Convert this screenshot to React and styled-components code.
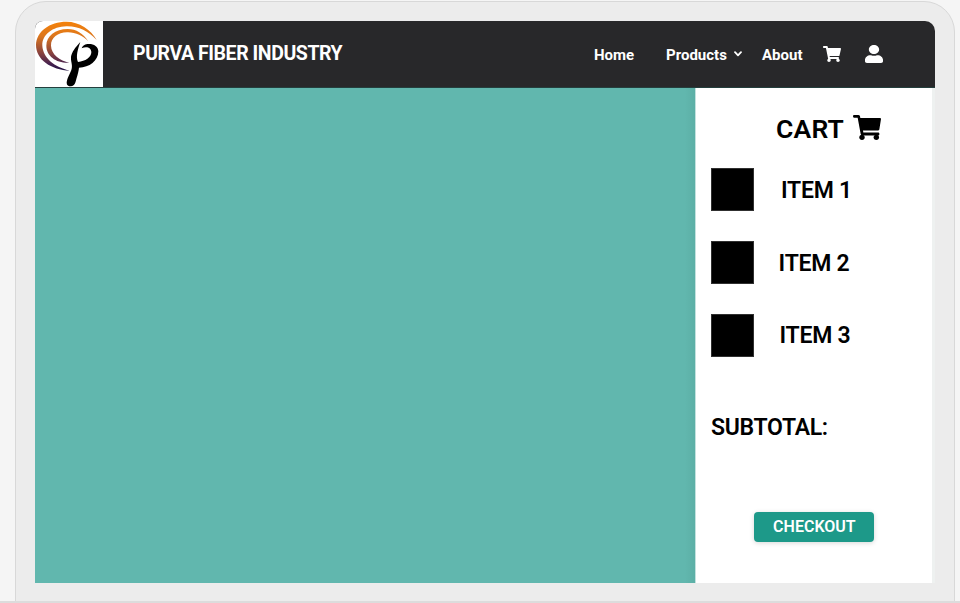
import React from "react";
import styled, { createGlobalStyle } from "styled-components";
import { FaShoppingCart, FaUser } from "react-icons/fa";

const GlobalStyle = createGlobalStyle`
  * { box-sizing: border-box; }
  body {
    margin: 0;
    height: 603px;
    overflow: hidden;
    background: #f5f5f5;
    font-family: Roboto, "Liberation Sans", sans-serif;
  }
`;

const Page = styled.div`
  height: 603px;
  overflow: hidden;
  padding: 1px 5px 0 15px;
  border-bottom: 2px solid #dcdcdc;
`;

const Device = styled.div`
  height: 640px;
  padding: 19px;
  border: 1px solid #d8d8d8;
  border-radius: 31px 31px 0 0;
  background: #ececec;
`;

const Screen = styled.div`
  width: 900px;
  height: 562px;
  display: flex;
  flex-direction: column;
  overflow: hidden;
  border-radius: 8px 10px 0 0;
`;

const Header = styled.header`
  height: 67px;
  flex: none;
  display: flex;
  align-items: flex-start;
  background: #28282a;
  border-bottom: 1px solid #243f3d;
`;

const Logo = styled.svg`
  width: 68px;
  height: 66px;
  flex: none;
  background: #fff;
`;

const Brand = styled.h1`
  width: 461px;
  margin: 20px 0 0 30px;
  font-size: 19.5px;
  line-height: 25px;
  font-weight: 700;
  letter-spacing: -0.44px;
  color: #fff;
  white-space: nowrap;
`;

const Nav = styled.nav`
  display: flex;
  align-items: flex-start;
  color: #fff;
`;

const NavItem = styled.span`
  width: ${(p) => p.$width}px;
  display: flex;
  align-items: center;
  margin-top: 24px;
  font-size: 15px;
  line-height: 20px;
  font-weight: 700;
  white-space: nowrap;
`;

const Chevron = styled.svg`
  width: 8px;
  height: 6px;
  margin: -2px 0 0 7.5px;
  fill: none;
  stroke: #fff;
  stroke-width: 1.8;
  stroke-linecap: round;
  stroke-linejoin: round;
`;

const NavIcon = styled.span`
  width: ${(p) => p.$slot}px;
  margin-top: ${(p) => p.$top}px;
  line-height: 0;
  svg {
    width: ${(p) => p.$width}px;
    height: ${(p) => p.$height}px;
  }
`;

const Content = styled.div`
  flex: 1;
  display: flex;
`;

const Canvas = styled.main`
  width: 660px;
  background: linear-gradient(to right, #61b7ae 650px, #5cafa6);
`;

const CartPanel = styled.aside`
  width: 240px;
  padding: 0 0 0 15px;
  border-left: 1px solid #c3e2df;
  border-right: 3px solid #eef1f0;
  background: #fff;
  color: #000;
`;

const CartHeading = styled.h2`
  height: 80px;
  margin: 0 0 0 65px;
  padding-top: 25px;
  display: flex;
  align-items: flex-start;
  font-size: 26.5px;
  line-height: 32px;
  font-weight: 600;
`;

const CartLabel = styled.span`
  width: 77px;
  letter-spacing: 0.2px;
`;

const CartIcon = styled.svg`
  width: 28px;
  height: 25px;
  margin-top: 2px;
`;

const ItemRow = styled.div`
  height: 73px;
  display: flex;
  align-items: flex-start;
`;

const Thumb = styled.div`
  width: 43px;
  height: 43px;
  margin-left: ${(p) => p.$inset}px;
  background: #000;
  border: 1px solid #303030;
`;

const ItemName = styled.span`
  margin: ${(p) => p.$top}px 0 0 ${(p) => p.$gap}px;
  font-size: 23px;
  line-height: 28px;
  font-weight: 600;
  letter-spacing: -0.25px;
`;

const Subtotal = styled.div`
  height: 98px;
  margin-top: 27px;
  font-size: 23px;
  line-height: 28px;
  font-weight: 600;
  letter-spacing: -0.3px;
`;

const Checkout = styled.button`
  display: block;
  width: 120px;
  height: 30px;
  margin: 0 0 0 43.4px;
  padding: 0 0 1px;
  border: 0;
  border-radius: 4px;
  background: #1d9989;
  box-shadow: 0 1px 5px rgba(0, 0, 0, 0.16);
  color: #fff;
  font: 600 16px/29px Roboto, "Liberation Sans", sans-serif;
`;

const items = [
  { name: "ITEM 1", inset: -0.4, top: 9, gap: 27.4 },
  { name: "ITEM 2", inset: 0, top: 9, gap: 24.6 },
  { name: "ITEM 3", inset: 0, top: 8, gap: 25.5 },
];

function BrandLogo() {
  return (
    <Logo viewBox="0 0 204 198" preserveAspectRatio="none" aria-label="Purva Fiber Industry">
      <defs>
        <linearGradient id="swoosh" x1="0" y1="0" x2="0" y2="150" gradientUnits="userSpaceOnUse">
          <stop offset="0" stopColor="#f58209" />
          <stop offset="0.3" stopColor="#dd771d" />
          <stop offset="0.65" stopColor="#87413f" />
          <stop offset="0.87" stopColor="#43204f" />
          <stop offset="1" stopColor="#1d1040" />
        </linearGradient>
      </defs>
      <path fill="url(#swoosh)" d="M185 57C168 26 132 2 95 2C43 2 4 32 3 72C3 116 48 147 105 149C58 138 24 110 22 74C21 41 53 17 94 16C131 15 158 30 185 57Z" />
      <path fill="url(#swoosh)" d="M160 61C144 37 124 24 98 24C61 24 34 45 34 74C34 106 65 127 103 125C74 119 49 100 48 74C47 50 69 35 96 34C121 33 143 44 160 61Z" />
      <path fill="#000" d="M136 63C121 79 110 94 108 108C107 122 113 131 110 143C107 156 96 170 95 185C95 193 100 196 108 196C119 194 121 186 124 174C129 159 131 148 132 140C163 140 190 119 190 91C190 75 174 67 157 69C148 70 142 75 140 82C155 75 169 80 169 94C169 109 151 121 129 123C122 107 128 86 136 63Z" />
    </Logo>
  );
}

function LargeCart() {
  return (
    <CartIcon viewBox="0 0 84 76" preserveAspectRatio="none" aria-hidden="true">
      <path d="M3 0H16Q20 0 21 4L22 9H81Q84 9 84 12L79 44Q78 47 75 47H30L31 53H76Q79 53 79 56V59Q79 62 76 62H28Q24 62 23 58L14 8H3Q0 8 0 4Q0 0 3 0Z" />
      <circle cx="27" cy="68" r="8" />
      <circle cx="70" cy="68" r="8" />
    </CartIcon>
  );
}

export default function App() {
  return (
    <>
      <GlobalStyle />
      <Page>
        <Device>
          <Screen>
            <Header>
              <BrandLogo />
              <Brand>PURVA FIBER INDUSTRY</Brand>
              <Nav>
                <NavItem $width={72}>Home</NavItem>
                <NavItem $width={96}>
                  Products
                  <Chevron viewBox="0 0 8 6"><path d="M1 1.2 4 4.3 7 1.2" /></Chevron>
                </NavItem>
                <NavItem $width={61}>About</NavItem>
                <NavIcon $slot={42} $width={18} $height={16} $top={25}>
                  <FaShoppingCart preserveAspectRatio="none" />
                </NavIcon>
                <NavIcon $slot={18} $width={18} $height={18} $top={24}>
                  <FaUser preserveAspectRatio="none" />
                </NavIcon>
              </Nav>
            </Header>
            <Content>
              <Canvas />
              <CartPanel>
                <CartHeading><CartLabel>CART</CartLabel><LargeCart /></CartHeading>
                {items.map((item) => (
                  <ItemRow key={item.name}>
                    <Thumb $inset={item.inset} />
                    <ItemName $top={item.top} $gap={item.gap}>{item.name}</ItemName>
                  </ItemRow>
                ))}
                <Subtotal>SUBTOTAL:</Subtotal>
                <Checkout>CHECKOUT</Checkout>
              </CartPanel>
            </Content>
          </Screen>
        </Device>
      </Page>
    </>
  );
}
